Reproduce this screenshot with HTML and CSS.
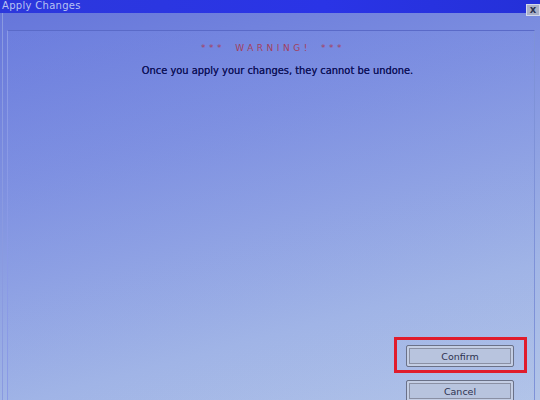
FILE: index.html
```html
<!DOCTYPE html>
<html>
<head>
<meta charset="utf-8">
<link rel="stylesheet" href="styles.css">
</head>
<body>
<div class="window">
  <div class="titlebar">
    <span class="title">Apply Changes</span>
    <span class="close">x</span>
  </div>
  <div class="frame">
    <div class="panel">
      <div class="warning">*** WARNING! ***</div>
      <div class="message">Once you apply your changes, they cannot be undone.</div>
      <div class="actions">
        <div class="btn-wrap">
          <button class="btn">Confirm</button>
          <div class="highlight"></div>
        </div>
        <button class="btn">Cancel</button>
      </div>
    </div>
  </div>
</div>
</body>
</html>
```
FILE: styles.css
```css
html, body {
  margin: 0;
  padding: 0;
  width: 540px;
  height: 400px;
  overflow: hidden;
  font-family: "DejaVu Sans", Verdana, sans-serif;
}
.window {
  display: flex;
  flex-direction: column;
  width: 540px;
  height: 400px;
  background: linear-gradient(165deg, #6474da 0%, #7e90e0 35%, #a2b6e6 75%, #b2c4e8 100%);
}
.titlebar {
  height: 13px;
  flex: none;
  display: flex;
  align-items: flex-start;
  justify-content: space-between;
  background: linear-gradient(90deg, #2c38dc 0%, #2a34e6 60%, #2430d8 100%);
}
.title {
  color: #b8c2f2;
  font-size: 10px;
  line-height: 11px;
  margin-left: 2px;
  margin-top: 0;
  letter-spacing: 0.3px;
}
.close {
  flex: none;
  width: 14px;
  height: 12px;
  margin-top: 4px;
  background: #a9b0c8;
  border: 1px solid #d4d9ea;
  color: #2c3350;
  font-size: 10px;
  font-weight: bold;
  line-height: 9px;
  text-align: center;
  box-sizing: border-box;
  position: relative;
  z-index: 1;
}
.frame {
  flex: 1;
  padding: 17px 5px 0 7px;
  border-left: 1px solid #8a9ae0;
  margin-left: 2px;
  box-sizing: border-box;
  display: flex;
  flex-direction: column;
  min-height: 0;
}
.panel {
  flex: none;
  height: 400px;
  border-top: 1px solid #5a6ac8;
  border-left: 1px solid #8a9ae6;
  border-right: 1px solid #7e92d8;
  margin-left: -3px;
  display: flex;
  flex-direction: column;
  align-items: center;
  box-sizing: border-box;
  background: linear-gradient(165deg, rgba(120,140,230,0.25), rgba(180,200,235,0.1));
}
.warning {
  margin-top: 11px;
  color: #a3405e;
  font-size: 9px;
  letter-spacing: 3.5px;
  line-height: 12px;
  word-spacing: 4px;
  padding-left: 4px;
}
.message {
  margin-top: 11px;
  color: #10145a;
  font-size: 9.9px;
  line-height: 12px;
  text-shadow: 0 0 0.4px #10145a;
  padding-left: 13px;
}
.actions {
  margin-top: 268px;
  align-self: flex-end;
  margin-right: 20px;
  display: flex;
  flex-direction: column;
  gap: 13px;
}
.btn-wrap {
  position: relative;
}
.btn {
  display: block;
  width: 108px;
  height: 22px;
  padding: 0;
  background: #b8c4de;
  border: 1px solid #6a7188;
  box-shadow: inset 0 0 0 2px #c4cee4, inset 0 0 0 3px #8a90a4;
  border-radius: 2px;
  color: #2e3250;
  font-family: "DejaVu Sans", Verdana, sans-serif;
  font-size: 9.5px;
}
.highlight {
  position: absolute;
  left: -12px;
  top: -8px;
  width: 133px;
  height: 36px;
  border: 3px solid #e01c2c;
  box-sizing: border-box;
}
```
